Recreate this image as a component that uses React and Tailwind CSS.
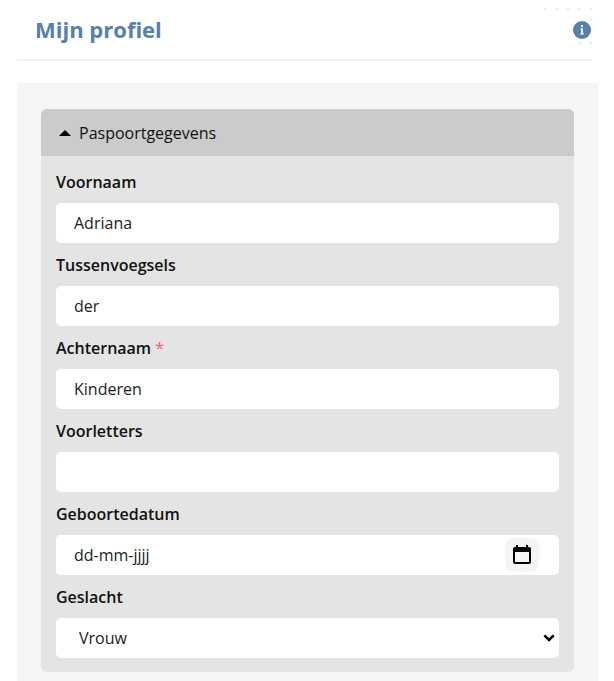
import React, { useState } from "react";

const fieldClass =
  "block h-10 w-full rounded-[5px] bg-white px-[18px] text-base text-[#222] outline-none placeholder:text-[#222] placeholder:opacity-100";

function Field({ id, label, required, children }) {
  return (
    <div>
      <label htmlFor={id} className="flex h-[43px] items-center gap-1 text-base font-semibold text-[#111]">
        {label}
        {required && <span className="font-normal text-[#ff5a5a]">*</span>}
      </label>
      {children}
    </div>
  );
}

function Dots() {
  const points = [[1, 1], [13, 1], [24, 1], [35, 1], [47, 1], [47, 12], [36, 35], [47, 35]];
  return (
    <svg className="absolute top-2 right-[22px]" width="48" height="37" aria-hidden="true">
      {points.map(([x, y]) => (
        <circle key={`${x}-${y}`} cx={x} cy={y} r="1" fill="#d3e3f2" />
      ))}
    </svg>
  );
}

function CalendarIcon() {
  return (
    <svg width="20" height="20" viewBox="0 0 20 20" aria-hidden="true">
      <path
        fillRule="evenodd"
        d="M4 0h2v2h8V0h2v2h1a2 2 0 0 1 2 2v13a2 2 0 0 1-2 2H3a2 2 0 0 1-2-2V4a2 2 0 0 1 2-2h1zM3 7v10h14V7z"
        fill="#000"
      />
    </svg>
  );
}

export default function App() {
  const [open, setOpen] = useState(true);
  return (
    <main className="relative min-h-screen bg-white pr-4 pl-[17px] font-['Open_Sans','Noto_Sans',sans-serif]">
      <Dots />
      <header className="relative mr-[6px] flex h-[61px] items-center justify-between border-b-2 border-[#edf2f7] pl-[18px]">
        <h1 className="text-[22px] font-bold text-[#5580b0]">Mijn profiel</h1>
        <button
          type="button"
          aria-label="Informatie"
          className="mr-px flex size-[18px] items-center justify-center rounded-full bg-[#5580b0]"
        >
          <svg width="18" height="18" viewBox="0 0 18 18" aria-hidden="true">
            <path d="M8 4h2v2H8zM7.500 7.200H10v5h.8v1.300H7.200v-1.300H8V8.500h-.5z" fill="#fff" />
          </svg>
        </button>
      </header>
      <div className="mt-[22px] bg-[#f5f5f5] px-6 pt-[26px] pb-6">
        <section className="overflow-hidden rounded-[6px] bg-[#e4e4e4]">
          <button
            type="button"
            aria-expanded={open}
            onClick={() => setOpen(!open)}
            className="flex h-[47px] w-full items-center gap-2 bg-[#cbcbcb] pl-[18px] text-base text-[#111]"
          >
            <svg width="12" height="6" viewBox="0 0 12 6" className={open ? "" : "rotate-180"} aria-hidden="true">
              <path d="M6 0l6 6H0z" fill="#000" />
            </svg>
            Paspoortgegevens
          </button>
          {open && (
            <form className="px-[15px] pt-1 pb-3.5">
              <Field id="voornaam" label="Voornaam">
                <input id="voornaam" defaultValue="Adriana" className={fieldClass} />
              </Field>
              <Field id="tussenvoegsels" label="Tussenvoegsels">
                <input id="tussenvoegsels" defaultValue="der" className={fieldClass} />
              </Field>
              <Field id="achternaam" label="Achternaam" required>
                <input id="achternaam" defaultValue="Kinderen" required className={fieldClass} />
              </Field>
              <Field id="voorletters" label="Voorletters">
                <input id="voorletters" className={fieldClass} />
              </Field>
              <Field id="geboortedatum" label="Geboortedatum">
                <div className="flex items-center rounded-[5px] bg-white pr-5">
                  <input id="geboortedatum" placeholder="dd-mm-jjjj" className={fieldClass} />
                  <button
                    type="button"
                    aria-label="Kies datum"
                    className="flex size-[34px] shrink-0 items-center justify-center rounded-lg bg-[#f3f4f6]"
                  >
                    <CalendarIcon />
                  </button>
                </div>
              </Field>
              <Field id="geslacht" label="Geslacht">
                <div className="grid items-center">
                  <select
                    id="geslacht"
                    defaultValue="Vrouw"
                    className="col-start-1 row-start-1 h-10 w-full appearance-none rounded-[5px] bg-white px-[23px] text-base text-[#222] outline-none"
                  >
                    <option>Vrouw</option>
                    <option>Man</option>
                  </select>
                  <svg
                    className="pointer-events-none col-start-1 row-start-1 mr-1 justify-self-end"
                    width="12"
                    height="8"
                    viewBox="0 0 12 8"
                    aria-hidden="true"
                  >
                    <path d="M1.300 1.300L6 6l4.700-4.700" fill="none" stroke="#000" strokeWidth="2.500" />
                  </svg>
                </div>
              </Field>
            </form>
          )}
        </section>
      </div>
    </main>
  );
}
